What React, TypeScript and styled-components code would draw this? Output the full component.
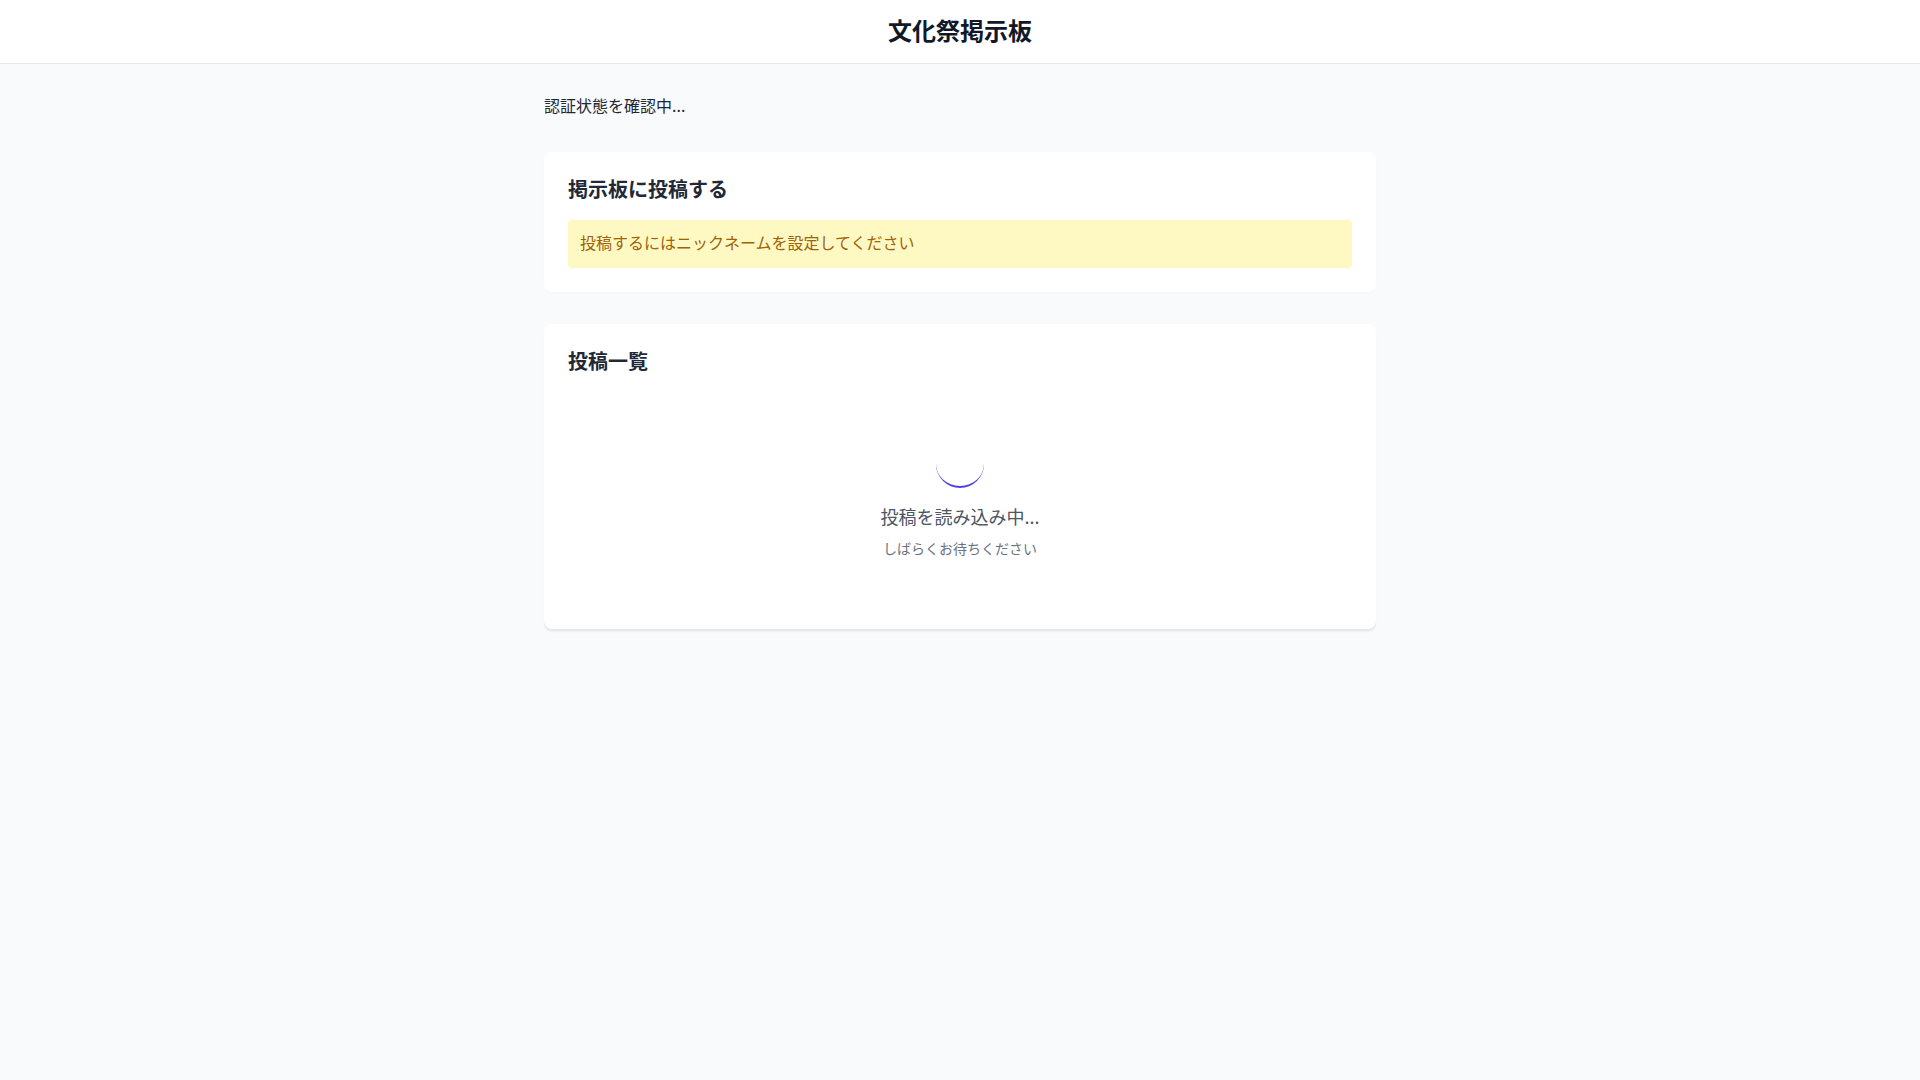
import styled, { createGlobalStyle, keyframes } from "styled-components";

const GlobalStyle = createGlobalStyle`
  * {
    box-sizing: border-box;
  }
  body {
    margin: 0;
    background: #f9fafb;
    font-family: "Noto Sans CJK JP", "Noto Sans", sans-serif;
    color: #1f2937;
  }
`;

const Header = styled.header`
  height: 64px;
  padding-bottom: 4px;
  background: #ffffff;
  border-bottom: 1px solid #e5e7eb;
  display: flex;
  align-items: center;
  justify-content: center;
`;

const Title = styled.h1`
  margin: 0;
  font-size: 24px;
  line-height: 32px;
  font-weight: 700;
  color: #111827;
`;

const Main = styled.main`
  width: 832px;
  margin: 0 auto;
  padding-top: 29px;
  display: flex;
  flex-direction: column;
`;

const AuthStatus = styled.p`
  margin: 0 0 35px;
  font-size: 16px;
  line-height: 24px;
  color: #1f2937;
`;

const Card = styled.section<{ $raised?: boolean }>`
  background: #ffffff;
  border-radius: 8px;
  padding: 23px 24px 24px;
  margin-bottom: 32px;
  box-shadow: ${(p) =>
    p.$raised
      ? "0 2px 0 #e5e7eb, 0 3px 2px rgba(0, 0, 0, 0.04)"
      : "0 1px 2px rgba(0, 0, 0, 0.02)"};
`;

const CardTitle = styled.h2`
  margin: 0 0 17px;
  font-size: 20px;
  line-height: 28px;
  font-weight: 700;
  color: #1f2937;
`;

const Notice = styled.div`
  background: #fef9c3;
  color: #a16207;
  border-radius: 4px;
  padding: 10px 12px 14px;
  font-size: 16px;
  line-height: 24px;
`;

const spin = keyframes`
  to {
    transform: rotate(360deg);
  }
`;

const Loading = styled.div`
  display: flex;
  flex-direction: column;
  align-items: center;
  padding: 48px 0 47px;
`;

const Spinner = styled.div`
  width: 48px;
  height: 48px;
  border-radius: 50%;
  border-bottom: 2px solid #4f46e5;
  animation: ${spin} 1s linear infinite;
  animation-play-state: paused;
`;

const LoadingText = styled.p`
  margin: 14px 0 0;
  font-size: 18px;
  line-height: 28px;
  color: #4b5563;
`;

const LoadingHint = styled.p`
  margin: 8px 0 0;
  font-size: 14px;
  line-height: 20px;
  color: #6b7280;
`;

export default function App() {
  return (
    <>
      <GlobalStyle />
      <Header>
        <Title>文化祭掲示板</Title>
      </Header>
      <Main>
        <AuthStatus>認証状態を確認中...</AuthStatus>
        <Card>
          <CardTitle>掲示板に投稿する</CardTitle>
          <Notice>投稿するにはニックネームを設定してください</Notice>
        </Card>
        <Card $raised>
          <CardTitle>投稿一覧</CardTitle>
          <Loading>
            <Spinner />
            <LoadingText>投稿を読み込み中...</LoadingText>
            <LoadingHint>しばらくお待ちください</LoadingHint>
          </Loading>
        </Card>
      </Main>
    </>
  );
}
